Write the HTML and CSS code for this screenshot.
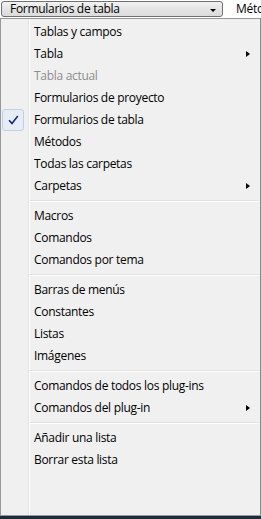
FILE: index.html
```html
<!DOCTYPE html>
<html lang="es">
<head>
    <meta charset="UTF-8">
    <title>Menú de listas</title>
    <link rel="stylesheet" href="styles.css">
</head>
<body>
    <div class="topbar">
        <div class="combo">
            <span class="combo-label">Formularios de tabla</span>
            <span class="combo-arrow"></span>
        </div>
        <span class="next-tab">Métodos</span>
    </div>

    <div class="menu">
        <div class="item"><span class="label">Tablas y campos</span></div>
        <div class="item"><span class="label">Tabla</span><span class="sub"></span></div>
        <div class="item disabled"><span class="label">Tabla actual</span></div>
        <div class="item"><span class="label">Formularios de proyecto</span></div>
        <div class="item checked">
            <span class="check">
                <svg width="11" height="10" viewBox="0 0 11 10"><path d="M1 5.2 L4 8.4 L9.8 1" fill="none" stroke="#1a2a78" stroke-width="1.6"/></svg>
            </span>
            <span class="label">Formularios de tabla</span>
        </div>
        <div class="item"><span class="label">Métodos</span></div>
        <div class="item"><span class="label">Todas las carpetas</span></div>
        <div class="item"><span class="label">Carpetas</span><span class="sub"></span></div>
        <div class="sep"></div>
        <div class="item"><span class="label">Macros</span></div>
        <div class="item"><span class="label">Comandos</span></div>
        <div class="item"><span class="label">Comandos por tema</span></div>
        <div class="sep"></div>
        <div class="item"><span class="label">Barras de menús</span></div>
        <div class="item"><span class="label">Constantes</span></div>
        <div class="item"><span class="label">Listas</span></div>
        <div class="item"><span class="label">Imágenes</span></div>
        <div class="sep"></div>
        <div class="item"><span class="label">Comandos de todos los plug-ins</span></div>
        <div class="item"><span class="label">Comandos del plug-in</span><span class="sub"></span></div>
        <div class="sep"></div>
        <div class="item"><span class="label">Añadir una lista</span></div>
        <div class="item"><span class="label">Borrar esta lista</span></div>
    </div>
    <div class="taskbar"></div>
</body>
</html>
```

FILE: styles.css
```css
html, body {
    margin: 0;
    padding: 0;
}
body {
    width: 261px;
    height: 519px;
    overflow: hidden;
    background: #fff;
    font-family: 'Open Sans', 'Noto Sans', Arial, sans-serif;
    font-size: 12px;
    color: #000;
}
.topbar {
    height: 18px;
    display: flex;
    align-items: flex-start;
    white-space: nowrap;
    overflow: hidden;
}
.combo {
    flex-shrink: 0;
    box-sizing: border-box;
    margin: 1px 0 0 1px;
    width: 222px;
    height: 16px;
    border: 1px solid #707070;
    border-radius: 3px;
    background: linear-gradient(#f2f2f2, #e4e4e4 50%, #dcdcdc);
    display: flex;
    align-items: center;
    padding: 0 0 0 8px;
}
.combo-label {
    flex: 1;
    line-height: 14px;
    letter-spacing: -0.3px;
}
.combo-arrow {
    width: 0;
    height: 0;
    margin-right: 6px;
    margin-top: 2px;
    border-left: 3px solid transparent;
    border-right: 3px solid transparent;
    border-top: 3px solid #000;
}
.next-tab {
    flex-shrink: 0;
    margin-left: 13px;
    line-height: 18px;
    letter-spacing: -0.3px;
}
.menu {
    box-sizing: border-box;
    width: 261px;
    height: 498px;
    border: 1px solid #979797;
    border-right-color: #8a8a8a;
    background:
        linear-gradient(to right, transparent 27px, #e2e3e3 27px, #e2e3e3 28px, #fff 28px, #fff 29px, transparent 29px),
        #f0f0f0;
    padding-top: 2px;
}
.item {
    position: relative;
    height: 22px;
    display: flex;
    align-items: center;
    padding-left: 33px;
    padding-right: 10px;
    white-space: nowrap;
}
.label {
    flex: 1;
    line-height: 22px;
    letter-spacing: -0.3px;
}
.disabled .label {
    color: #8d8d8d;
}
.sub {
    width: 0;
    height: 0;
    border-top: 3.5px solid transparent;
    border-bottom: 3.5px solid transparent;
    border-left: 4px solid #000;
}
.check {
    position: absolute;
    left: 1px;
    top: 0;
    box-sizing: border-box;
    width: 22px;
    height: 22px;
    border: 1px solid #c2cfe0;
    border-radius: 3px;
    background: #e6edf6;
    display: flex;
    align-items: center;
    justify-content: center;
}
.sep {
    height: 8px;
    margin-left: 29px;
    margin-right: 2px;
    display: flex;
    flex-direction: column;
    justify-content: center;
}
.sep::before {
    content: "";
    display: block;
    height: 1px;
    background: #e0e0e0;
    border-bottom: 1px solid #fff;
}
.taskbar {
    height: 3px;
    background: #1e2b3c;
}
```
